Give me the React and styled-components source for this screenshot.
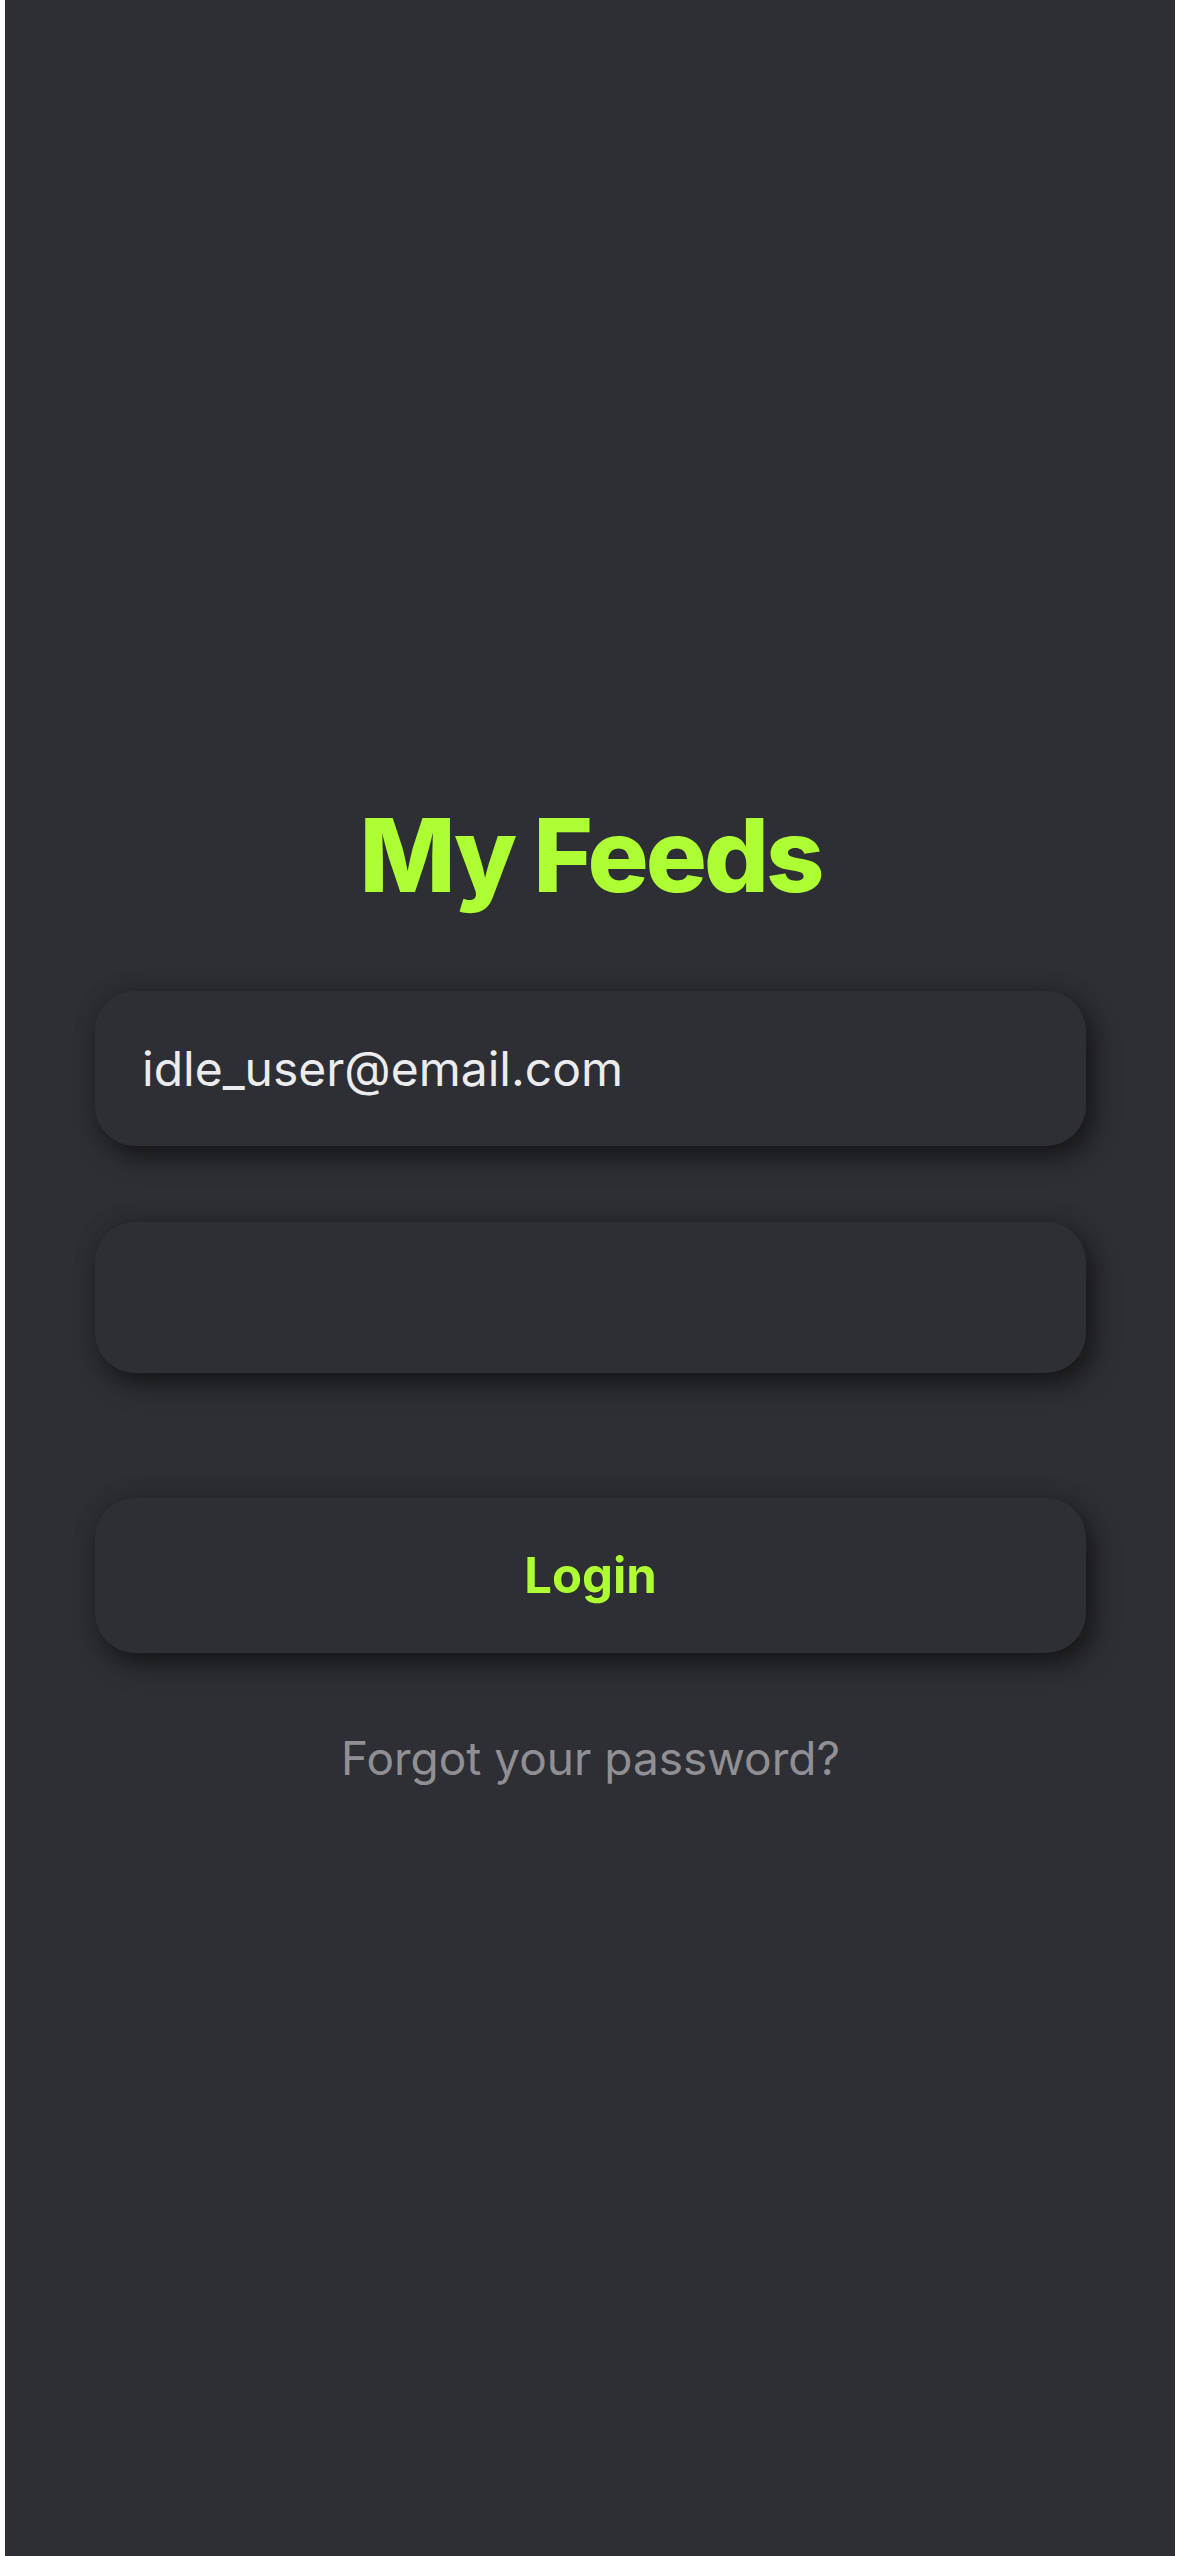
import React from 'react';
import styled, { createGlobalStyle } from 'styled-components';

const GlobalStyle = createGlobalStyle`
  html, body {
    margin: 0;
    padding: 0;
    background: #ffffff;
  }
  * {
    box-sizing: border-box;
  }
`;

const Screen = styled.div`
  /* dark app surface, with thin light strips at the sides */
  margin: 0 4px 0 5px;
  min-height: 2556px;
  background-color: #2e2f34;
  font-family: Inter, 'Noto Sans', sans-serif;
`;

const Form = styled.div`
  display: flex;
  flex-direction: column;
  padding: 804px 89px 0 90px;
`;

const Title = styled.h1`
  margin: 0 0 85px;
  font-size: 102px;
  line-height: 1;
  font-weight: 800;
  letter-spacing: -3px;
  text-align: center;
  color: #adfe32;
`;

const Field = styled.input`
  display: block;
  width: 100%;
  height: ${(p) => p.$height}px;
  margin: 0 0 ${(p) => p.$gap}px;
  padding: 0 47px;
  border: none;
  outline: none;
  border-radius: 40px;
  background-color: #2e2f34;
  box-shadow: 7px 11px 26px rgba(0, 0, 0, 0.5), 0 -2px 24px rgba(0, 0, 0, 0.12);
  font-family: inherit;
  font-size: 48px;
  color: #ececee;
`;

const LoginButton = styled.button`
  display: flex;
  align-items: center;
  justify-content: center;
  width: 100%;
  height: 155px;
  margin: 0 0 78px;
  border: none;
  border-radius: 40px;
  background-color: #2e2f34;
  box-shadow: 7px 11px 26px rgba(0, 0, 0, 0.5), 0 -2px 24px rgba(0, 0, 0, 0.12);
  font-family: inherit;
  font-size: 49px;
  font-weight: 700;
  color: #adfe32;
  cursor: pointer;
`;

const ForgotLink = styled.a`
  display: block;
  font-size: 46px;
  line-height: 54px;
  text-align: center;
  color: #909094;
  text-decoration: none;
`;

const App = () => {
  return (
    <>
      <GlobalStyle />
      <Screen>
        <Form>
          <Title>My Feeds</Title>
          <Field $height={155} $gap={76} type="email" defaultValue="idle_user@email.com" />
          <Field $height={151} $gap={125} type="password" defaultValue="" />
          <LoginButton>Login</LoginButton>
          <ForgotLink href="#">Forgot your password?</ForgotLink>
        </Form>
      </Screen>
    </>
  );
};

export default App;
